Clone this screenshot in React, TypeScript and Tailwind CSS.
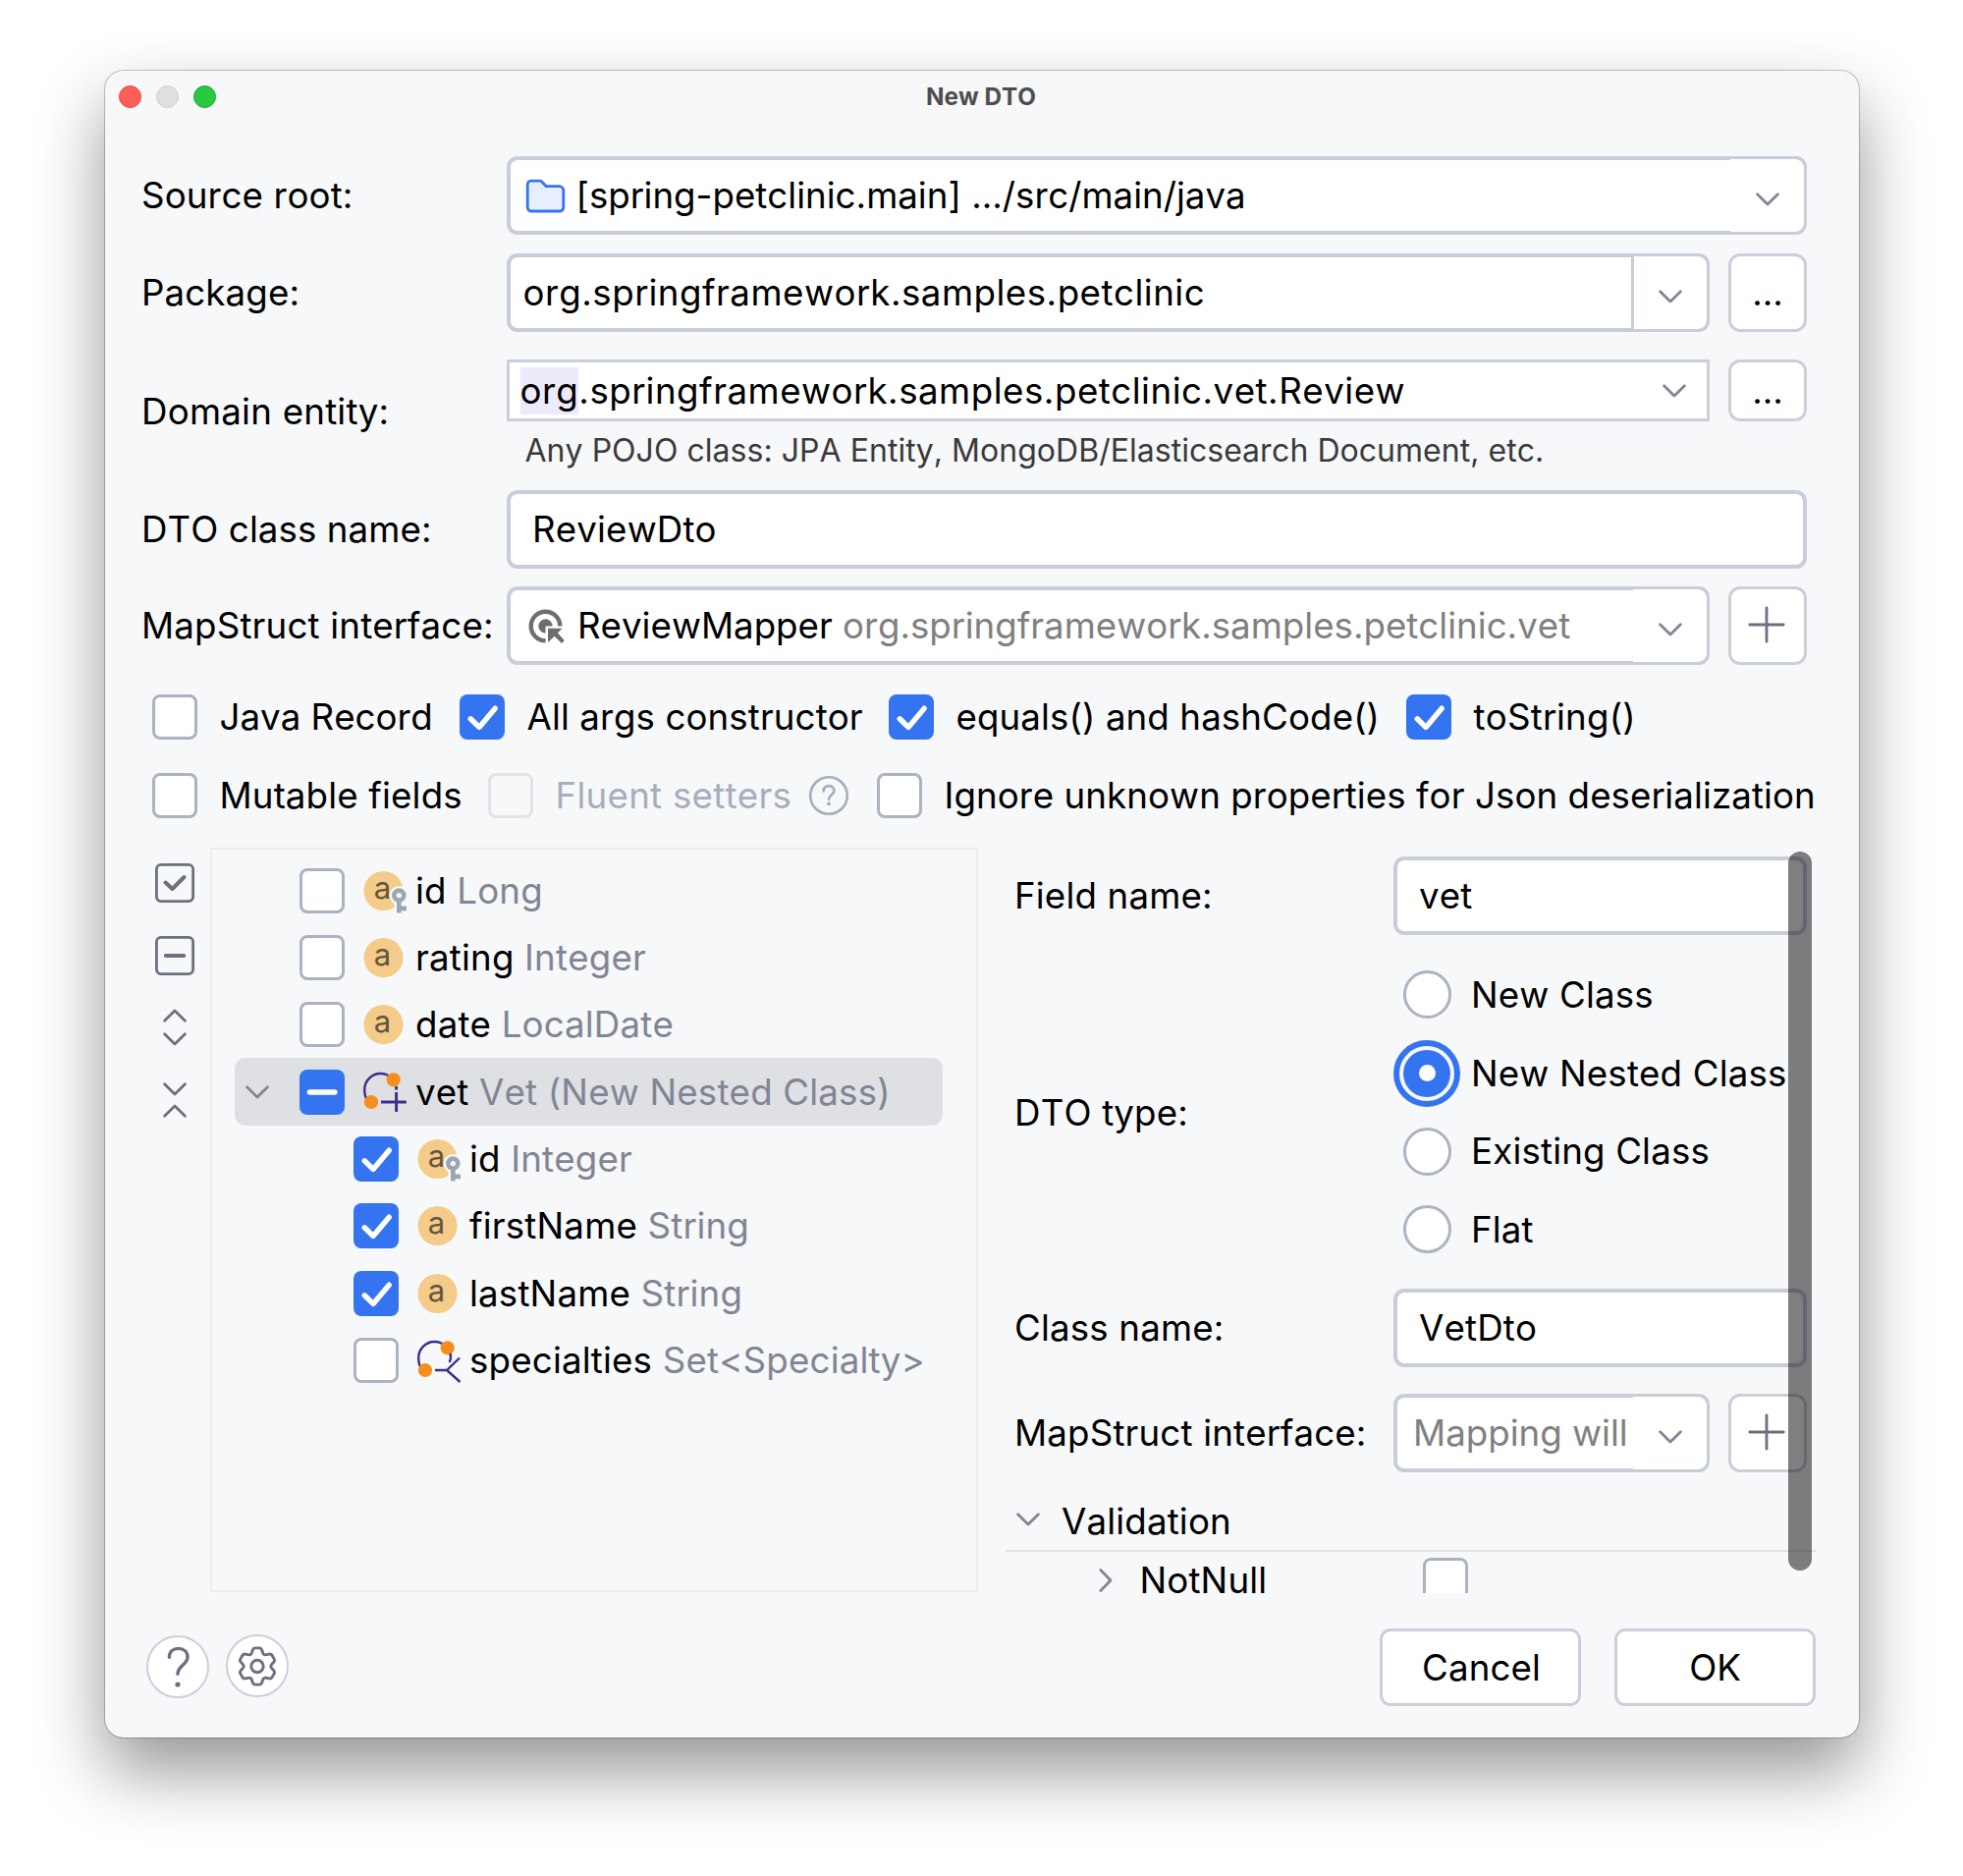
import React from "react";

type IconProps = { className?: string };

function Chevron({ className = "" }: IconProps) {
  return (
    <svg className={"block shrink-0 " + className} width="26" height="16" viewBox="0 0 26 16" fill="none">
      <path d="M2.6 2.8L13 13L23.4 2.8" stroke="currentColor" strokeWidth="2.8" strokeLinecap="round" strokeLinejoin="round" />
    </svg>
  );
}

function Plus() {
  return (
    <svg className="relative -left-px -top-px" width="40" height="40" viewBox="0 0 40 40" fill="none">
      <path d="M20 2.8V37.2M2.8 20H37.2" stroke="#6c707e" strokeWidth="2.8" strokeLinecap="round" />
    </svg>
  );
}

function FolderIcon() {
  return (
    <svg className="shrink-0" width="45" height="45" viewBox="0 0 16 16">
      <path
        d="M8.106 4.346L8.253 4.5H13C13.828 4.5 14.5 5.17 14.5 6V12.13C14.5 12.95 13.93 13.5 13.367 13.5H2.633C2.068 13.5 1.5 12.95 1.5 12.13V3.867C1.5 3.047 2.068 2.5 2.633 2.5H6.122C6.258 2.5 6.388 2.556 6.483 2.654Z"
        fill="#e7effd"
        stroke="#3574f0"
      />
    </svg>
  );
}

function MapperIcon() {
  return (
    <svg className="shrink-0" width="45" height="45" viewBox="0 0 45 45" fill="none">
      <path d="M35.3 22.5A14.8 14.8 0 1 0 20.5 37.3" stroke="#6e6e6e" strokeWidth="4.4" />
      <path d="M27.7 22.5A7.2 7.2 0 1 0 20.5 29.7V22.5Z" fill="#6e6e6e" />
      <path d="M23 24.8H37.5L32.9 29.4L39.8 37.1L37 40L29.7 32.7L23 39Z" fill="#6e6e6e" />
    </svg>
  );
}

function AttributeIcon({ primaryKey = false }: { primaryKey?: boolean }) {
  return (
    <svg className="block shrink-0" width="47" height="46" viewBox="0 0 47 46">
      <circle cx="22.5" cy="23" r="20" fill="#f4cb88" />
      <text x="21.4" y="31.3" textAnchor="middle" fontSize="31" fontFamily="Inter" fontWeight="400" fill="#63553f">
        a
      </text>
      {primaryKey && (
        <g>
          <circle cx="38.3" cy="27.6" r="9.6" fill="#f7f8fa" />
          <path d="M33.5 34H46V45.6H33.5Z" fill="#f7f8fa" />
          <circle cx="38.3" cy="27.6" r="5" fill="none" stroke="#9aa7b0" strokeWidth="4.6" />
          <path d="M36 33.5H40.6V38.4H46V43.2H40.6V45.6H36Z" fill="#9aa7b0" />
        </g>
      )}
    </svg>
  );
}

function RelationIcon({ many = false }: { many?: boolean }) {
  return (
    <svg className="block shrink-0" width="47" height="46" viewBox="0 0 47 46" fill="none">
      <path d="M6 31C3.4 27.5 3.2 24 3.2 20.5C3.2 11.5 10.5 4 19.5 4C23.5 4 27 5.4 29.5 7.5" stroke="#3b2e8c" strokeWidth="2.4" />
      <circle cx="32.7" cy="10.3" r="7.1" fill="#f68d1d" />
      <circle cx="10" cy="33" r="7.1" fill="#f68d1d" />
      {many ? (
        <g stroke="#3b2e8c" strokeWidth="2.4">
          <path d="M20 33H32L45 20.5M32 33L45.5 45" />
          <path d="M35.6 16C36.4 19.5 36.2 22 34.6 25" />
        </g>
      ) : (
        <g stroke="#3b2e8c" strokeWidth="2.9">
          <path d="M20 33H45.8M35.6 23V43" />
          <path d="M35.6 17V20.6" />
        </g>
      )}
    </svg>
  );
}

type CheckState = "on" | "off" | "mixed" | "disabled";

function Checkbox({ state = "off" }: { state?: CheckState }) {
  if (state === "off") {
    return <span className="block size-[46px] shrink-0 rounded-[8px] border-[3px] border-[#adb2c1] bg-white" />;
  }
  if (state === "disabled") {
    return <span className="block size-[46px] shrink-0 rounded-[8px] border-[3px] border-[#e1e3e7] bg-[#f7f8fa]" />;
  }
  return (
    <span className="flex size-[46px] shrink-0 items-center justify-center rounded-[8px] bg-[#3574f0]">
      <svg width="46" height="46" viewBox="0 0 46 46" fill="none" stroke="#fff" strokeLinecap="round" strokeLinejoin="round">
        {state === "on" ? <path d="M11.2 24.8L20 33.4L36.2 14.2" strokeWidth="5.4" /> : <path d="M10.5 23H35.8" strokeWidth="5.6" />}
      </svg>
    </span>
  );
}

function CheckOption({ label, state, width, labelClass = "tracking-[0.1px]" }: { label: string; state: CheckState; width: string; labelClass?: string }) {
  return (
    <div className={"flex shrink-0 items-center gap-[22.5px] whitespace-nowrap " + width}>
      <Checkbox state={state} />
      <span className={labelClass}>{label}</span>
    </div>
  );
}

function SquareButton({ children, height = "h-20" }: { children: React.ReactNode; height?: string }) {
  return (
    <button className={"flex w-20 shrink-0 items-center justify-center rounded-[12px] border-[3px] border-[#cccfd9] bg-white " + height}>
      {children}
    </button>
  );
}

const inputBox = "h-20 rounded-[11px] border-[4px] border-[#c9cdd8] bg-white flex items-center";

function ArrowCell({ divided = false }: { divided?: boolean }) {
  return (
    <span
      className={
        "-my-px -mr-px flex h-[74px] shrink-0 items-center justify-center rounded-r-[9px] bg-white text-[#818594] " +
        (divided ? "w-[77px] border-l-[3px] border-[#c9cdd8]" : "w-[75px]")
      }
    >
      <Chevron className={divided ? "mt-[8px] -ml-px" : "mt-[8px]"} />
    </span>
  );
}

function TreeRow({
  name,
  type,
  state = "off",
  icon,
  nested = false,
  selected = false,
}: {
  name: string;
  type: string;
  state?: CheckState;
  icon: React.ReactNode;
  nested?: boolean;
  selected?: boolean;
}) {
  return (
    <div className={"flex h-[68.3px] w-[721px] items-center rounded-[11px] " + (selected ? "bg-[#dfe0e4]" : "")}>
      <span className={"flex shrink-0 items-center text-[#818594] " + (nested ? "w-[121px]" : "w-[66px]")}>
        {selected && <Chevron className="ml-[10px]" />}
      </span>
      <Checkbox state={state} />
      <span className="ml-[17px] w-[55px] shrink-0">{icon}</span>
      <span className="whitespace-nowrap tracking-[0.18px]">
        {name} <span className="text-[#818594]">{type}</span>
      </span>
    </div>
  );
}

function Radio({ label, checked = false }: { label: string; checked?: boolean }) {
  return (
    <div className="flex h-[79.7px] items-center whitespace-nowrap">
      <span className="flex w-[68px] shrink-0 items-center justify-center">
        {checked ? (
          <span className="flex size-[68px] items-center justify-center rounded-full border-[6px] border-[#3574f0]">
            <span className="flex size-[48px] items-center justify-center rounded-full bg-[#3574f0]">
              <span className="size-[17px] rounded-full bg-white" />
            </span>
          </span>
        ) : (
          <span className="size-[49px] rounded-full border-[3px] border-[#adb2c1] bg-white" />
        )}
      </span>
      <span className="ml-[11px]">{label}</span>
    </div>
  );
}

/* Six-tooth gear outline: one tooth profile rotated in 60° steps. */
const gearPath = (() => {
  const at = (x: number, y: number, k: number) => {
    const a = (k * Math.PI) / 3;
    return (x * Math.cos(a) - y * Math.sin(a)).toFixed(2) + " " + (x * Math.sin(a) + y * Math.cos(a)).toFixed(2);
  };
  let d = "M" + at(-5.9, -13, 0);
  for (let k = 0; k < 6; k++) {
    d += "L" + at(-4.7, -16.6, k) + "Q" + at(-4, -18.6, k) + " " + at(-2.2, -18.6, k);
    d += "L" + at(2.2, -18.6, k) + "Q" + at(4, -18.6, k) + " " + at(4.7, -16.6, k);
    d += "L" + at(5.9, -13, k) + "Q" + at(6.7, -11.6, k) + " " + at(-5.9, -13, k + 1);
  }
  return d + "Z";
})();

function SideTools() {
  return (
    <div className="flex w-[56px] shrink-0 flex-col items-center pt-[15px] pr-[16px] text-[#6c707e]">
      <svg width="42" height="42" viewBox="0 0 42 42" fill="none" stroke="currentColor" strokeWidth="2.8" strokeLinecap="round" strokeLinejoin="round">
        <rect x="2.4" y="2.4" width="37.2" height="37.2" rx="4.5" />
        <path d="M11.5 20.5L18.5 27L30.5 15" strokeWidth="4" />
      </svg>
      <svg className="mt-8" width="42" height="42" viewBox="0 0 42 42" fill="none" stroke="currentColor" strokeWidth="2.8" strokeLinecap="round">
        <rect x="2.4" y="2.4" width="37.2" height="37.2" rx="4.5" />
        <path d="M11.8 21H30.2" strokeWidth="4" />
      </svg>
      <Chevron className="mt-[32px] rotate-180" />
      <Chevron className="mt-[8px]" />
      <Chevron className="mt-[35px]" />
      <Chevron className="mt-[6px] rotate-180" />
    </div>
  );
}

function TreePanel() {
  return (
    <div className="h-[758px] w-[782px] shrink-0 border-2 border-[#ebecef] pt-[7.6px] pl-[23px]">
      <TreeRow name="id" type="Long" icon={<AttributeIcon primaryKey />} />
      <TreeRow name="rating" type="Integer" icon={<AttributeIcon />} />
      <TreeRow name="date" type="LocalDate" icon={<AttributeIcon />} />
      <TreeRow name="vet" type="Vet (New Nested Class)" state="mixed" selected icon={<RelationIcon />} />
      <TreeRow name="id" type="Integer" state="on" nested icon={<AttributeIcon primaryKey />} />
      <TreeRow name="firstName" type="String" state="on" nested icon={<AttributeIcon />} />
      <TreeRow name="lastName" type="String" state="on" nested icon={<AttributeIcon />} />
      <TreeRow name="specialties" type="Set<Specialty>" nested icon={<RelationIcon many />} />
    </div>
  );
}

function DetailPanel() {
  return (
    <div className="relative ml-[28px] h-[759px] w-[825px] shrink-0 overflow-hidden tracking-[0.16px]">
      <div className="mt-[9px] flex items-center pl-[9px]">
        <span className="w-[386px]">Field name:</span>
        <div className={inputBox + " w-[421px] pl-[22px]"}>vet</div>
      </div>
      <div className="mt-[21px] flex items-center pl-[9px]">
        <span className="mt-[2px] w-[386px]">DTO type:</span>
        <div>
          <Radio label="New Class" />
          <Radio label="New Nested Class" checked />
          <Radio label="Existing Class" />
          <Radio label="Flat" />
        </div>
      </div>
      <div className="mt-[20px] flex items-center pl-[9px]">
        <span className="w-[386px]">Class name:</span>
        <div className={inputBox + " w-[421px] pl-[22px]"}>VetDto</div>
      </div>
      <div className="mt-[27px] flex items-center pl-[9px]">
        <span className="w-[386px] whitespace-nowrap">MapStruct interface:</span>
        <div className={inputBox + " w-[322px] justify-between pl-[16px] tracking-normal text-[#808080]"}>
          <span className="whitespace-nowrap">Mapping will</span>
          <ArrowCell />
        </div>
        <div className="ml-[19px]">
          <SquareButton>
            <Plus />
          </SquareButton>
        </div>
      </div>
      <div className="mt-[26px] flex h-[49px] items-center pl-[9.5px] text-[#818594]">
        <Chevron className="-mt-1" />
        <span className="ml-[21.5px] text-black">Validation</span>
      </div>
      <div className="mt-[4px] h-[2px] bg-[#dfe1e5]" />
      <div className="mt-[5px] flex h-[48px] items-center">
        <span className="flex w-[136.5px] pl-[88.5px] text-[#818594]">
          <Chevron className="-rotate-90" />
        </span>
        <span className="w-[288.5px]">NotNull</span>
        <Checkbox />
      </div>
      <div className="absolute top-[4px] right-[4px] h-[732px] w-[24px] rounded-full bg-black/50" />
    </div>
  );
}

export default function App() {
  return (
    <div className="h-[1910px] w-[1999px] overflow-hidden bg-white pt-[72px] pl-[107px]">
      <div className="flex h-[1697px] w-[1786px] flex-col rounded-[19px] bg-[#f7f8fa] font-[Inter,sans-serif] text-[36.7px] leading-[44px] text-black shadow-[0_0_0_1px_rgba(0,0,0,0.22),0_34px_70px_rgba(0,0,0,0.42)] [font-kerning:none]">
        <header className="relative flex h-[52px] items-center justify-center pr-[2px]">
          <div className="absolute left-[14px] flex gap-[15px]">
            <span className="size-[23px] rounded-full border border-[#e2463f] bg-[#ff5f57]" />
            <span className="size-[23px] rounded-full border border-[#d0d0d1] bg-[#dfdfe0]" />
            <span className="size-[23px] rounded-full border border-[#12ac28] bg-[#28c840]" />
          </div>
          <span className="text-[24.3px] font-bold text-[#4d4d4d]">New DTO</span>
        </header>

        <main className="flex flex-col pl-[37px]">
          <div className="mt-[35px] flex items-center">
            <span className="w-[372px] tracking-[0.12px]">Source root:</span>
            <div className={inputBox + " w-[1324px] pl-[13px]"}>
              <FolderIcon />
              <span className="ml-[8.5px] flex-1">[spring-petclinic.main] .../src/main/java</span>
              <ArrowCell />
            </div>
          </div>

          <div className="mt-[19px] flex items-center">
            <span className="w-[372px] tracking-[0.12px]">Package:</span>
            <div className={inputBox + " w-[1225px] pl-[12.5px]"}>
              <span className="flex-1 tracking-[0.49px]">org.springframework.samples.petclinic</span>
              <ArrowCell divided />
            </div>
            <div className="ml-[19px]">
              <SquareButton>...</SquareButton>
            </div>
          </div>

          <div className="mt-[28px] flex h-[106px] items-center">
            <span className="w-[372px] tracking-[0.22px]">Domain entity:</span>
            <div className="w-[1225px] self-start">
              <div className="flex h-[63px] items-center border-[3px] border-[#cccfda] bg-white pl-[10.5px] text-[#818594]">
                <span className="flex-1 tracking-[0.5px] text-black">
                  <span className="inline-block h-[48px] bg-[#edeafb] leading-[48px]">org</span>.springframework.samples.petclinic.vet.Review
                </span>
                <Chevron className="mr-[20px]" />
              </div>
              <p className="mt-[17px] pl-[18.5px] text-[32px] leading-[26px] tracking-[0.04px] whitespace-nowrap text-[#3a3a3a]">
                Any POJO class: JPA Entity, MongoDB/Elasticsearch Document, etc.
              </p>
            </div>
            <div className="ml-[19px] self-start">
              <SquareButton height="h-[63px]">...</SquareButton>
            </div>
          </div>

          <div className="mt-[27px] flex items-center">
            <span className="w-[372px] tracking-[0.08px]">DTO class name:</span>
            <div className={inputBox + " w-[1324px] pl-[22px] tracking-[0.15px]"}>ReviewDto</div>
          </div>

          <div className="mt-[18px] flex items-center">
            <span className="w-[372px] tracking-[0.17px] whitespace-nowrap">MapStruct interface:</span>
            <div className={inputBox + " w-[1225px] pl-[14.5px]"}>
              <MapperIcon />
              <span className="ml-[8.5px] flex-1 whitespace-nowrap">
                ReviewMapper <span className="text-[#808080]">org.springframework.samples.petclinic.vet</span>
              </span>
              <ArrowCell />
            </div>
            <div className="ml-[19px]">
              <SquareButton>
                <Plus />
              </SquareButton>
            </div>
          </div>

          <div className="mt-[30px] ml-[11px] flex h-[46px]">
            <CheckOption label="Java Record" state="off" width="w-[313px]" labelClass="" />
            <CheckOption label="All args constructor" state="on" width="w-[437px]" />
            <CheckOption label="equals() and hashCode()" state="on" width="w-[527px]" />
            <CheckOption label="toString()" state="on" width="w-[300px]" labelClass="tracking-[0.22px]" />
          </div>
          <div className="mt-[34px] ml-[11px] flex h-[46px] items-center">
            <CheckOption label="Mutable fields" state="off" width="w-[342px]" labelClass="tracking-[0.16px]" />
            <CheckOption label="Fluent setters" state="disabled" width="w-[326px]" labelClass="tracking-[0.26px] text-[#a8adbd]" />
            <svg width="42" height="42" viewBox="0 0 42 42" fill="none" stroke="#a8adbd" strokeLinecap="round">
              <circle cx="21" cy="21" r="18.8" strokeWidth="2.6" />
              <path d="M15.6 16.4C15.6 13.2 17.9 11.2 21 11.2S26.4 13.2 26.4 16.2C26.4 20 21 20.6 21 25" strokeWidth="2.7" />
              <circle cx="21" cy="29.4" r="1.9" fill="#a8adbd" stroke="none" />
            </svg>
            <CheckOption
              label="Ignore unknown properties for Json deserialization"
              state="off"
              width="ml-[28px] w-[950px]"
              labelClass="tracking-[0.07px]"
            />
          </div>
        </main>

        <section className="mt-[30px] flex pl-[51px]">
          <SideTools />
          <TreePanel />
          <DetailPanel />
        </section>

        <footer className="mt-[36px] flex h-[79px] items-center pr-[44px] pl-[42px]">
          <button className="mb-px flex size-[64px] items-center justify-center rounded-full border-2 border-[#cccfda] bg-white">
            <svg width="44" height="44" viewBox="0 0 44 44" fill="none" stroke="#6c707e">
              <path d="M13.4 12.2C13.4 6.7 17.2 3.4 22.6 3.4S32 6.8 32 12.2C32 19.6 22 21.2 22 29.2" strokeWidth="3.4" strokeLinecap="round" />
              <circle cx="22" cy="40" r="2.6" fill="#6c707e" stroke="none" />
            </svg>
          </button>
          <button className="mb-[3px] ml-[17px] flex size-[64px] items-center justify-center rounded-full border-2 border-[#cccfda] bg-white">
            <svg width="44" height="44" viewBox="-22 -22.5 44 44" fill="none" stroke="#6c707e" strokeWidth="2.9" strokeLinejoin="round">
              <path d={gearPath} />
              <circle r="6.2" />
            </svg>
          </button>
          <button className="ml-auto h-[79px] w-[205px] rounded-[11px] border-[3px] border-[#cccfd9] bg-white pl-[2px] tracking-[0.1px]">Cancel</button>
          <button className="ml-[34px] h-[79px] w-[205px] rounded-[11px] border-[3px] border-[#cccfd9] bg-white">OK</button>
        </footer>
      </div>
    </div>
  );
}
